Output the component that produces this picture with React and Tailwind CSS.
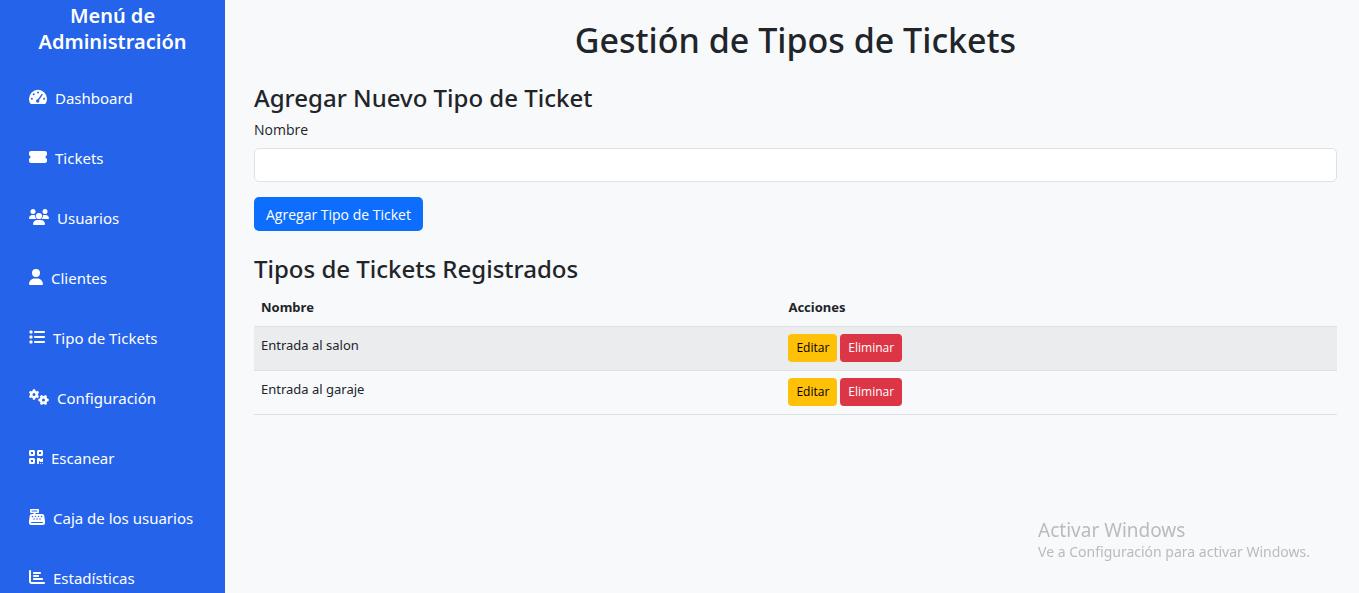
import React, { useState } from 'react';
import {
    FaTicketSimple,
    FaUser,
    FaList,
    FaGears,
    FaQrcode,
    FaCashRegister,
    FaChartBar,
} from 'react-icons/fa6';

const GaugeIcon = ({ className }) => (
    <svg viewBox="0 0 18 16" className={className} aria-hidden="true">
        <path fill="currentColor" d="M9 .8a9 9 0 0 0-9 9c0 1.7.5 3.200 1.200 4.500.2.4.6.7 1.100.7h13.400c.5 0 .9-.3 1.100-.7.8-1.300 1.200-2.800 1.200-4.500a9 9 0 0 0-9-9z" />
        <g fill="#2563eb">
            <circle cx="9" cy="3.400" r="1" />
            <circle cx="4.700" cy="5.300" r="1" />
            <circle cx="2.900" cy="9.800" r="1" />
            <circle cx="15.100" cy="9.800" r="1" />
        </g>
        <path fill="none" stroke="#2563eb" strokeWidth="1.400" strokeLinecap="round" d="M8.800 11.600l4.200-6" />
        <circle cx="8.700" cy="12" r="1.700" fill="#2563eb" />
    </svg>
);

const UsersIcon = ({ className }) => (
    <svg viewBox="0 0 20 16" className={className} aria-hidden="true">
        <g fill="currentColor">
            <circle cx="4" cy="2.500" r="2.500" />
            <circle cx="16" cy="2.500" r="2.500" />
            <path d="M0 9.300C0 7.500 1.500 6 3.300 6h1.400c.5 0 1 .1 1.400.3A4 4 0 0 0 7.400 10H.7a.7.7 0 0 1-.7-.7zM20 9.300C20 7.500 18.500 6 16.700 6h-1.400c-.5 0-1 .1-1.400.3A4 4 0 0 1 12.600 10h6.700c.4 0 .7-.3.700-.7z" />
            <circle cx="10" cy="7" r="3.100" />
            <path d="M4 15.200C4 12.900 5.900 11 8.200 11h3.600c2.300 0 4.200 1.900 4.200 4.200 0 .5-.4.800-.8.800H4.800c-.4 0-.8-.3-.8-.8z" />
        </g>
    </svg>
);

const menuItems = [
    { label: 'Dashboard', href: '#dashboard', icon: GaugeIcon, width: 'w-[18px]' },
    { label: 'Tickets', href: '#tickets', icon: FaTicketSimple, width: 'w-[18px]' },
    { label: 'Usuarios', href: '#usuarios', icon: UsersIcon, width: 'w-5' },
    { label: 'Clientes', href: '#clientes', icon: FaUser, width: 'w-[14px]' },
    { label: 'Tipo de Tickets', href: '#tipos', icon: FaList, width: 'w-4' },
    { label: 'Configuración', href: '#configuracion', icon: FaGears, width: 'w-5' },
    { label: 'Escanear', href: '#escanear', icon: FaQrcode, width: 'w-[14px]' },
    { label: 'Caja de los usuarios', href: '#caja', icon: FaCashRegister, width: 'w-4' },
    { label: 'Estadísticas', href: '#estadisticas', icon: FaChartBar, width: 'w-4' },
];

const Sidebar = () => (
    <aside className="w-[225px] shrink-0 h-screen overflow-hidden bg-[#2563eb] text-white">
        <h2 className="px-4 pt-[3px] text-[20px] leading-[26px] font-semibold text-center">Menú de Administración</h2>
        <nav className="mt-[21px] flex flex-col gap-4">
            {menuItems.map(({ label, href, icon: Icon, width }) => (
                <a key={href} href={href} className="flex h-11 items-center gap-2 pl-[29px] text-[15px] whitespace-nowrap">
                    <Icon className={`mb-[2px] h-4 shrink-0 ${width}`} />
                    {label}
                </a>
            ))}
        </nav>
    </aside>
);

const App = () => {
    const [nombre, setNombre] = useState('');
    const [tipos, setTipos] = useState([
        { id: 1, nombre: 'Entrada al salon' },
        { id: 2, nombre: 'Entrada al garaje' },
    ]);

    const handleSubmit = (e) => {
        e.preventDefault();
        if (!nombre.trim()) return;
        setTipos([...tipos, { id: Date.now(), nombre: nombre.trim() }]);
        setNombre('');
    };

    const handleDelete = (id) => setTipos(tipos.filter((tipo) => tipo.id !== id));

    return (
        <div className="flex min-h-screen bg-[#f8f9fb] font-['Noto_Sans','Open_Sans',sans-serif] text-[#212529]">
            <Sidebar />

            <main className="min-w-0 grow pt-[18px] pr-[22px] pl-[29px] text-[13px]">
                <h1 className="text-center text-[34px] leading-[44px] font-medium">Gestión de Tipos de Tickets</h1>

                {/* Add form */}
                <h2 className="mt-5 text-[24px] leading-8 font-medium">Agregar Nuevo Tipo de Ticket</h2>
                <form onSubmit={handleSubmit} className="font-['Open_Sans','Noto_Sans',sans-serif] text-[14px]">
                    <label htmlFor="nombre" className="mt-1.5 block leading-5">Nombre</label>
                    <input id="nombre" type="text" value={nombre} onChange={(e) => setNombre(e.target.value)} className="mt-2 block h-[34px] w-full rounded-[5px] border border-[#dee2e6] bg-white px-3 focus:outline-none focus:border-[#86b7fe]" />
                    <button type="submit" className="mt-[15px] h-[34px] rounded-[5px] bg-[#0d6efd] px-3 text-white">Agregar Tipo de Ticket</button>
                </form>

                {/* Registered types */}
                <h2 className="mt-[22px] text-[24px] leading-8 font-medium">Tipos de Tickets Registrados</h2>
                <table className="mt-[5px] w-full table-fixed text-left">
                    <colgroup>
                        <col className="w-[48.7%]" />
                        <col />
                    </colgroup>
                    <thead>
                        <tr className="border-b border-[#dee2e6]">
                            <th className="h-9 px-[7px] font-bold">Nombre</th>
                            <th className="h-9 px-[7px] font-bold">Acciones</th>
                        </tr>
                    </thead>
                    <tbody>
                        {tipos.map((tipo) => (
                            <tr key={tipo.id} className="border-b border-[#dee2e6] odd:bg-[#ebeced]">
                                <td className="px-[7px] py-2 align-top leading-5">{tipo.nombre}</td>
                                <td className="px-[7px] pt-[7px] pb-2">
                                    <div className="flex gap-[3px] font-['Open_Sans','Noto_Sans',sans-serif] text-[12px]">
                                        <button type="button" className="h-7 rounded-[4px] bg-[#ffc107] px-2 text-black">Editar</button>
                                        <button type="button" onClick={() => handleDelete(tipo.id)} className="h-7 rounded-[4px] bg-[#dc3545] px-2 text-white">Eliminar</button>
                                    </div>
                                </td>
                            </tr>
                        ))}
                    </tbody>
                </table>
            </main>

            {/* Activation watermark */}
            <div className="pointer-events-none fixed right-[49px] bottom-[31px] text-[#b9bbbd]">
                <p className="text-[19px] leading-6">Activar Windows</p>
                <p className="text-[14px] leading-5">Ve a Configuración para activar Windows.</p>
            </div>
        </div>
    );
};

export default App;
